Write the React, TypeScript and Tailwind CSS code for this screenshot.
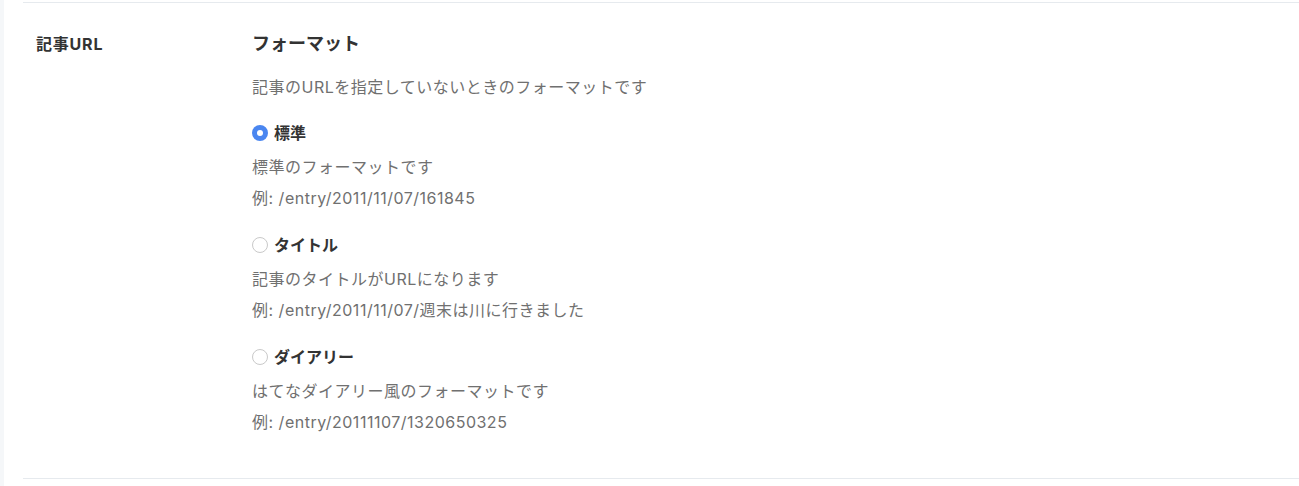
const font = { fontFamily: 'Inter, "Noto Sans CJK JP", sans-serif' };

type Option = {
  label: string;
  desc: string;
  example: string;
  checked?: boolean;
};

const options: Option[] = [
  { label: '標準', desc: '標準のフォーマットです', example: '例: /entry/2011/11/07/161845', checked: true },
  { label: 'タイトル', desc: '記事のタイトルがURLになります', example: '例: /entry/2011/11/07/週末は川に行きました' },
  { label: 'ダイアリー', desc: 'はてなダイアリー風のフォーマットです', example: '例: /entry/20111107/1320650325' },
];

function Radio({ checked }: { checked?: boolean }) {
  if (checked) {
    return (
      <span className="flex h-4 w-4 items-center justify-center rounded-full bg-[#4a86f0]">
        <span className="h-[6px] w-[6px] rounded-full bg-white" />
      </span>
    );
  }
  return <span className="block h-4 w-4 rounded-full border border-[#c9c9c9] bg-white" />;
}

export default function App() {
  return (
    <div className="flex h-[486px] w-[1299px] bg-white" style={font}>
      <div className="w-[4px] bg-[#f5f7f9]" />
      <div className="ml-[19px] flex-1 pt-[2px]">
        <div className="flex border-y border-[#e6eaee] pt-[29px] pb-[46px]">
          <div className="w-[229px] pl-[13px] text-[16px] font-bold leading-[24px] tracking-[0.8px] text-[#333]">記事URL</div>
          <div className="flex-1">
            <h2 className="text-[18px] font-bold leading-[24px] text-[#333]">フォーマット</h2>
            <p className="mt-[21px] text-[16px] leading-[20px] tracking-[0.5px] text-[#707070]">
              記事のURLを指定していないときのフォーマットです
            </p>
            {options.map((o, i) => (
              <div key={o.label} className={i === 0 ? 'mt-[24px]' : 'mt-[25px]'}>
                <label className="flex h-[24px] items-center gap-[6px]">
                  <Radio checked={o.checked} />
                  <span className="text-[16px] font-bold text-[#333]">{o.label}</span>
                </label>
                <p className="mt-[12px] text-[16px] leading-[20px] tracking-[0.5px] text-[#707070]">{o.desc}</p>
                <p className="mt-[11px] text-[16px] leading-[20px] tracking-[0.5px] text-[#707070]">{o.example}</p>
              </div>
            ))}
          </div>
        </div>
      </div>
    </div>
  );
}
